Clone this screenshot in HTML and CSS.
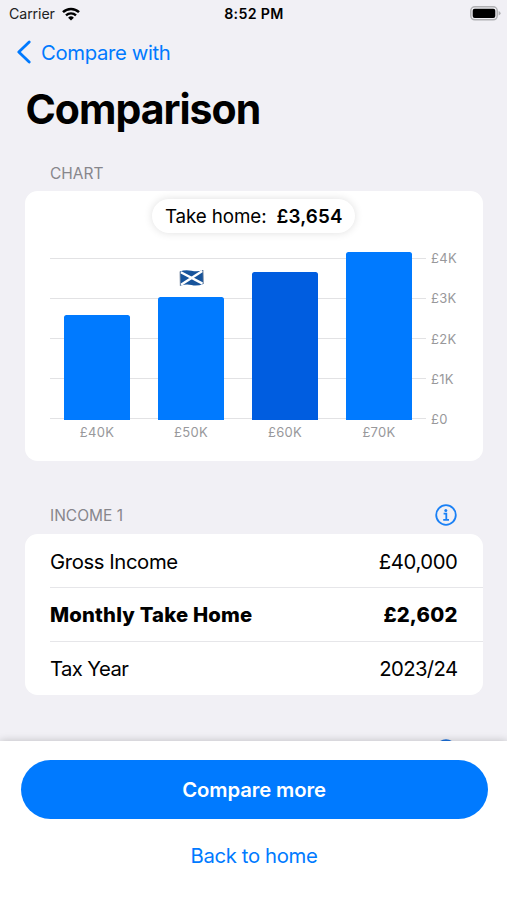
FILE: index.html
```html
<!DOCTYPE html>
<html lang="en">
<head>
    <meta charset="UTF-8">
    <meta name="viewport" content="width=device-width, initial-scale=1.0">
    <title>Comparison</title>
    <link rel="stylesheet" href="styles.css">
</head>
<body>

    <!-- Status bar -->
    <div class="status-bar">
        <div class="carrier">
            <span>Carrier</span>
            <svg class="wifi" width="18" height="14" viewBox="0 0 18 14">
                <path d="M1 5.2 A11.4 11.4 0 0 1 17 5.2" fill="none" stroke="#000" stroke-width="2.5"/>
                <path d="M4 8.4 A7.1 7.1 0 0 1 14 8.4" fill="none" stroke="#000" stroke-width="2.3"/>
                <path d="M9 13.6 L6.1 10.7 A4.1 4.1 0 0 1 11.9 10.7 Z"/>
            </svg>
        </div>
        <span class="time">8:52 PM</span>
        <svg class="battery" width="31" height="15" viewBox="0 0 31 15">
            <rect x="0.8" y="0.8" width="26.4" height="13" rx="4" fill="none" stroke="#b0b0b3" stroke-width="1.5"/>
            <rect x="2.7" y="2.7" width="22.6" height="9.2" rx="2"/>
            <path d="M28.6 5 Q30.6 5.8 30.6 7.3 Q30.6 8.8 28.6 9.6 Z" fill="#b0b0b3"/>
        </svg>
    </div>

    <a class="back" href="#">
        <svg width="15" height="24" viewBox="0 0 15 24">
            <path d="M13.2 2 L2.8 12 L13.2 22" fill="none" stroke="#007aff" stroke-width="2.8" stroke-linecap="round" stroke-linejoin="round"/>
        </svg>
        <span>Compare with</span>
    </a>

    <main>
        <h1>Comparison</h1>

        <div class="section-header chart-header">
            <span>CHART</span>
        </div>
        <div class="card chart-card">
            <div class="pill"><span>Take home:</span><strong>£3,654</strong></div>
            <div class="chart">
                <div class="plot">
                    <div class="grid-lines">
                        <i></i><i></i><i></i><i></i><i></i>
                    </div>
                    <div class="bars">
                        <div class="bar" style="height: 105px"></div>
                        <div class="bar-group">
                            <svg class="flag" width="25" height="18" viewBox="0 0 25 18">
                                <path d="M1 2.5 Q6 .3 12.5 1.7 T24 1 L24.3 15 Q18 17.5 12.5 16 T1.3 16.8 Z" fill="#17549b"/>
                                <path d="M1.8 3.2 L23.6 14.6 M23.4 2 L2 15.8" stroke="#fff" stroke-width="2.4"/>
                                <path d="M1 2.5 L1.3 16.8 M24 1 L24.3 15" stroke="#6f8099" stroke-width="0.8"/>
                            </svg>
                            <div class="bar" style="height: 123px"></div>
                        </div>
                        <div class="bar selected" style="height: 147.5px"></div>
                        <div class="bar" style="height: 167.5px"></div>
                    </div>
                </div>
                <div class="y-axis">
                    <span>£4K</span><span>£3K</span><span>£2K</span><span>£1K</span><span>£0</span>
                </div>
            </div>
            <div class="x-axis">
                <span>£40K</span><span>£50K</span><span>£60K</span><span>£70K</span>
            </div>
        </div>

        <div class="section-header income-header">
            <span>INCOME 1</span>
            <svg class="info" width="22" height="22" viewBox="0 0 22 22">
                <circle cx="11" cy="11" r="9.8" fill="none" stroke="#1a80f5" stroke-width="1.8"/>
                <circle cx="10.8" cy="6.4" r="1.5" fill="#1a80f5"/>
                <path d="M8.6 9.6 H11.3 V15.6 M8.2 15.8 H14" fill="none" stroke="#1a80f5" stroke-width="1.8"/>
            </svg>
        </div>
        <div class="card list">
            <div class="row"><span>Gross Income</span><span>£40,000</span></div>
            <div class="row bold"><span>Monthly Take Home</span><span>£2,602</span></div>
            <div class="row tight"><span>Tax Year</span><span>2023/24</span></div>
        </div>

        <div class="section-header next-header">
            <svg class="info" width="22" height="22" viewBox="0 0 22 22">
                <circle cx="11" cy="11" r="9.8" fill="none" stroke="#1a70dd" stroke-width="1.8"/>
            </svg>
        </div>
    </main>

    <footer>
        <button class="primary">Compare more</button>
        <a class="home-link" href="#">Back to home</a>
    </footer>

</body>
</html>
```

FILE: styles.css
```css
* {
    box-sizing: border-box;
}
body {
    margin: 0;
    height: 900px;
    display: flex;
    flex-direction: column;
    overflow: hidden;
    background: #f1f0f5;
    color: #000;
    font-family: Inter, "Liberation Sans", sans-serif;
    font-size: 20.3px;
}
a {
    color: #007aff;
    text-decoration: none;
}
.status-bar {
    display: grid;
    grid-template-columns: 1fr auto 1fr;
    align-items: center;
    height: 27px;
    padding: 0 6px 0 9px;
    font-size: 14.2px;
}
.carrier {
    display: flex;
    align-items: center;
    gap: 7px;
    letter-spacing: -0.1px;
    color: #222;
}
.time {
    margin-right: 2px;
    font-weight: 600;
    letter-spacing: 0.35px;
}
.battery {
    justify-self: end;
}
.back {
    display: flex;
    align-items: center;
    gap: 10px;
    height: 50px;
    padding-left: 16px;
    letter-spacing: -0.36px;
}
main {
    flex: 1;
    min-height: 0;
    overflow: hidden;
    padding: 0 24.5px 0 25px;
}
h1 {
    margin: 0 0 0 0.5px;
    height: 64px;
    line-height: 64px;
    font-size: 41px;
    font-weight: 700;
    letter-spacing: -1px;
}
.section-header {
    display: flex;
    justify-content: space-between;
    align-items: center;
    padding: 0 26px 0 25px;
    font-size: 15.5px;
    color: #87868c;
}
.chart-header {
    height: 49.5px;
    padding-top: 15.5px;
}
.card {
    background: #fff;
    border-radius: 12.5px;
}
.chart-card {
    height: 270.5px;
    padding: 8.5px 25px 0;
}
.pill {
    display: flex;
    align-items: center;
    justify-content: center;
    gap: 10px;
    width: 203px;
    height: 34px;
    margin: 0 auto;
    border-radius: 17px;
    background: #fff;
    box-shadow: 0 0 8px rgba(0, 0, 0, 0.13);
    font-size: 18.8px;
    letter-spacing: -0.1px;
}
.pill strong {
    font-weight: 600;
    letter-spacing: 0.15px;
}
.chart {
    display: flex;
    margin-top: 19px;
    height: 167.5px;
}
/* grid lines and bars share one cell */
.plot {
    display: grid;
    width: 376px;
    height: 167.5px;
}
.grid-lines {
    grid-area: 1 / 1;
    display: flex;
    flex-direction: column;
    justify-content: space-between;
    padding-top: 5.6px;
}
.grid-lines i {
    height: 1px;
    background: #e2e2e4;
}
.bars {
    grid-area: 1 / 1;
    display: grid;
    grid-template-columns: repeat(4, 1fr);
    align-items: end;
    justify-items: center;
}
.bar {
    width: 66px;
    border-radius: 2.5px 2.5px 0 0;
    background: #007aff;
}
.bar.selected {
    background: #005de0;
}
.bar-group {
    display: flex;
    flex-direction: column;
    align-items: center;
    gap: 9.5px;
}
.y-axis {
    display: flex;
    flex-direction: column;
    justify-content: space-between;
    margin: -2px 0 -8.5px 5px;
    font-size: 13px;
    line-height: 17px;
    letter-spacing: 0.3px;
    color: #98989b;
}
.x-axis {
    display: grid;
    grid-template-columns: repeat(4, 94px);
    margin-top: 3px;
    text-align: center;
    font-size: 13px;
    line-height: 18px;
    letter-spacing: 0.3px;
    color: #98989b;
}
.income-header {
    height: 73px;
    padding-top: 35px;
}
.row {
    display: flex;
    justify-content: space-between;
    align-items: center;
    height: 53.8px;
    margin-left: 25px;
    padding-top: 1px;
    padding-right: 25px;
    letter-spacing: -0.4px;
}
.row + .row {
    box-shadow: 0 -1px #e6e6e9;
}
.row.bold {
    padding-top: 0;
    font-weight: 800;
    letter-spacing: 0.18px;
}
.row.tight {
    padding-top: 0;
    letter-spacing: -0.6px;
}
.next-header {
    height: 87px;
    padding-top: 22px;
    justify-content: flex-end;
}
footer {
    flex: none;
    display: flex;
    flex-direction: column;
    align-items: center;
    height: 159.5px;
    padding: 19.5px 19.5px 0 20.5px;
    background: #fff;
    box-shadow: 0 0 8px rgba(0, 0, 0, 0.22);
    z-index: 1;
}
.primary {
    width: 100%;
    height: 59px;
    border: 0;
    border-radius: 29.5px;
    background: #007aff;
    color: #fff;
    font: 600 20.3px Inter, "Liberation Sans", sans-serif;
    letter-spacing: -0.12px;
}
.home-link {
    margin-top: 24px;
    letter-spacing: -0.35px;
}
```
